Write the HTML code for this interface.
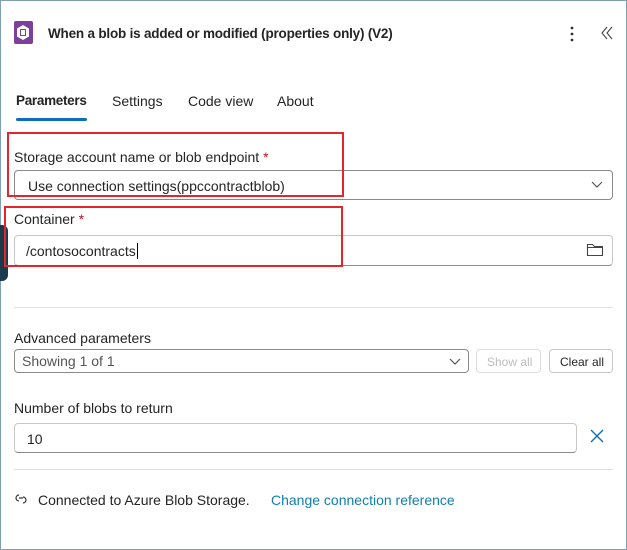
<!DOCTYPE html>
<html><head><style>
*{margin:0;padding:0;box-sizing:border-box}
body{width:627px;height:550px;background:#fff;font-family:"Liberation Sans",sans-serif;color:#242424;position:relative;overflow:hidden;font-size:14px}
.a{position:absolute;white-space:nowrap}
.frame{position:absolute;left:0;top:0;width:627px;height:550px;border:1px solid #7f9fb3}
.box{position:absolute;border:1px solid #8a8a8a;border-radius:4px;background:#fff}
.red{position:absolute;border:2px solid #e3262c}
.sep{position:absolute;height:1px;background:#e0e0e0}
</style></head><body>
<div class="frame"></div>
<div class="a" style="left:14px;top:21px;width:19px;height:23px;background:#7b3f9c;border-radius:2px"></div>
<svg class="a" style="left:15px;top:24px" width="16" height="17" viewBox="0 0 16 17"><polygon points="8,1 14,4.5 14,12.5 8,16 2,12.5 2,4.5" fill="#fff"/><rect x="5.5" y="5.5" width="5" height="6" fill="none" stroke="#7b3f9c" stroke-width="1"/></svg>
<div class="a" style="left:48px;top:26px;font-size:13.5px;font-weight:bold;letter-spacing:-0.2px">When a blob is added or modified (properties only) (V2)</div>
<svg class="a" style="left:569px;top:26px" width="6" height="16"><circle cx="3" cy="2" r="1.4" fill="#333"/><circle cx="3" cy="8" r="1.4" fill="#333"/><circle cx="3" cy="14" r="1.4" fill="#333"/></svg>
<svg class="a" style="left:600px;top:26px" width="14" height="14" viewBox="0 0 14 14"><path d="M7 1L2 7l5 6M12 1L7 7l5 6" fill="none" stroke="#444" stroke-width="1.1"/></svg>
<div class="a" style="left:16px;top:93px;font-weight:bold;font-size:13.5px;letter-spacing:-0.3px">Parameters</div>
<div class="a" style="left:112px;top:93px">Settings</div>
<div class="a" style="left:188px;top:93px">Code view</div>
<div class="a" style="left:277px;top:93px">About</div>
<div class="a" style="left:16px;top:118px;width:71px;height:3px;background:#0f6cbd;border-radius:2px"></div>

<div class="a" style="left:14px;top:149px">Storage account name or blob endpoint <span style="color:#c50f1f">*</span></div>
<div class="box" style="left:14px;top:170px;width:599px;height:30px"></div>
<div class="a" style="left:28px;top:178px">Use connection settings(ppccontractblob)</div>
<svg class="a" style="left:591px;top:181px" width="12" height="8"><path d="M1 1l5 5 5-5" fill="none" stroke="#555" stroke-width="1.2"/></svg>
<div class="red" style="left:7px;top:132px;width:337px;height:65px"></div>

<div class="a" style="left:0;top:225px;width:8px;height:56px;background:#1b3a4b;border-radius:0 6px 6px 0"></div>
<div class="a" style="left:14px;top:211px">Container <span style="color:#c50f1f">*</span></div>
<div class="box" style="left:14px;top:235px;width:599px;height:31px;border-color:#c8c8c8;border-bottom-color:#8a8a8a"></div>
<div class="a" style="left:26px;top:243px">/contosocontracts<span style="border-left:1px solid #000;margin-left:1px"></span></div>
<svg class="a" style="left:586px;top:242px" width="18" height="15" viewBox="0 0 18 15"><path d="M1.5 2.5h5l2 2h8v9h-15z M1.5 5.5h15" fill="none" stroke="#444" stroke-width="1.1"/></svg>
<div class="red" style="left:4px;top:206px;width:339px;height:61px"></div>

<div class="sep" style="left:14px;top:307px;width:599px"></div>
<div class="a" style="left:14px;top:330px">Advanced parameters</div>
<div class="box" style="left:14px;top:349px;width:455px;height:24px"></div>
<div class="a" style="left:22px;top:353px;color:#555">Showing 1 of 1</div>
<svg class="a" style="left:449px;top:358px" width="12" height="8"><path d="M1 1l5 5 5-5" fill="none" stroke="#555" stroke-width="1.2"/></svg>
<div class="box" style="left:476px;top:349px;width:65px;height:24px;border-color:#dcdcdc"></div>
<div class="a" style="left:487px;top:355px;font-size:12px;color:#bdbdbd">Show all</div>
<div class="box" style="left:549px;top:349px;width:64px;height:24px;border-color:#c8c8c8"></div>
<div class="a" style="left:560px;top:355px;font-size:12px">Clear all</div>

<div class="a" style="left:14px;top:400px">Number of blobs to return</div>
<div class="box" style="left:14px;top:423px;width:563px;height:30px;border-color:#c8c8c8;border-bottom-color:#8a8a8a"></div>
<div class="a" style="left:27px;top:431px">10</div>
<svg class="a" style="left:590px;top:429px" width="14" height="14"><path d="M1 1l12 12M13 1L1 13" stroke="#0f6cbd" stroke-width="1.4"/></svg>
<div class="sep" style="left:14px;top:469px;width:599px"></div>

<svg class="a" style="left:14px;top:492px" width="14" height="14" viewBox="0 0 14 14"><path d="M5 3a3 3 0 1 0 0 6M9 5a3 3 0 1 1 0 6M5 6h4" fill="none" stroke="#333" stroke-width="1.2"/></svg>
<div class="a" style="left:38px;top:492px">Connected to Azure Blob Storage.</div>
<div class="a" style="left:271px;top:492px;color:#0f7fae">Change connection reference</div>
</body></html>
